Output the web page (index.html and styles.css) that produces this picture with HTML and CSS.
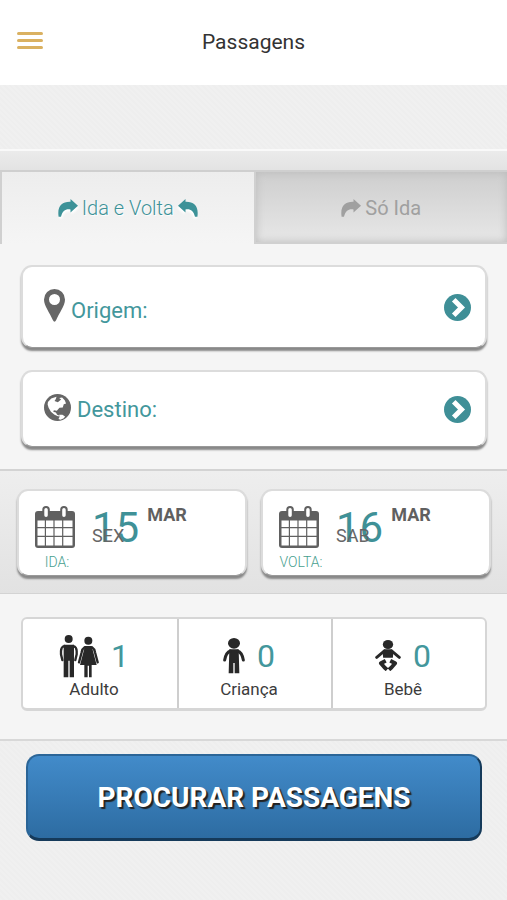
FILE: index.html
```html
<!DOCTYPE html>
<html lang="pt-BR">
<head>
<meta charset="utf-8">
<meta name="viewport" content="width=device-width, initial-scale=1">
<title>Passagens</title>
<link rel="stylesheet" href="styles.css">
</head>
<body>
<svg class="defs" aria-hidden="true">
  <symbol id="arrow" viewBox="0 0 20 18"><path d="M12.500 0 20 6.800 12.500 13.500V10.500C8 9.600 4.600 11.500 3 17.800H.6C-1 7 4 2.500 12.500 2.800Z"/></symbol>
  <symbol id="chevron" viewBox="0 0 27 27"><circle cx="13.500" cy="13.500" r="13.500"/><path d="M11.500 7.500 17.500 13.500 11.500 19.500" fill="none" stroke="#fff" stroke-width="5" stroke-linecap="square"/></symbol>
  <symbol id="calendar" viewBox="0 0 40 42">
    <rect y="5" width="40" height="37" rx="3"/>
    <path fill="#fff" d="M2.500 14.500h7.300v6.600H2.500zm8.500 0h7.400v6.600H11zm8.600 0h7.500v6.600h-7.500zm8.700 0h9.200v6.600h-9.200zM2.500 22.300h7.300v7.400H2.500zm8.500 0h7.400v7.400H11zm8.600 0h7.500v7.400h-7.500zm8.700 0h9.200v7.400h-9.200zM2.500 31h7.300v8.500H2.500zm8.500 0h7.400v8.500H11zm8.600 0h7.500v8.500h-7.500zm8.700 0h9.200v8.500h-9.200z"/>
    <rect x="8.300" y="1" width="5.500" height="11" rx="2.700" fill="#fff" stroke="currentColor" stroke-width="2"/>
    <rect x="26.200" y="1" width="5.500" height="11" rx="2.700" fill="#fff" stroke="currentColor" stroke-width="2"/>
  </symbol>
</svg>

<header class="topbar">
  <button class="menu" type="button" aria-label="Menu"><span></span><span></span><span></span></button>
  <h1>Passagens</h1>
</header>

<main>
  <div class="band"></div>
  <nav class="tabs">
    <button class="tab active" type="button"><svg><use href="#arrow"/></svg>Ida e Volta<svg class="flip"><use href="#arrow"/></svg></button>
    <button class="tab" type="button"><svg><use href="#arrow"/></svg>Só Ida</button>
  </nav>

  <section class="places">
    <button class="card place origin" type="button">
      <svg class="pin" viewBox="0 0 21 33"><path fill-rule="evenodd" d="M10.500 0A10.500 10.500 0 0 0 0 10.500C0 17 6 24 8.800 31q1.700 3.500 3.400 0C15 24 21 17 21 10.500A10.500 10.500 0 0 0 10.500 0ZM10.500 5a5.500 5.500 0 1 1 0 11 5.500 5.500 0 0 1 0-11Z"/></svg>
      <span>Origem:</span>
      <svg class="go"><use href="#chevron"/></svg>
    </button>
    <button class="card place" type="button">
      <svg class="globe" viewBox="132 98 82 82"><circle cx="173" cy="139" r="41"/><path fill="#fff" d="m144 122 10-10 16-6-2 7-4 6 10 4 10-8-6-5 9-1 8 8 4 10-7 2-3 10-10 1-8 9-9-2-2 5 8 2 4 7 6 2-2 3-12-5-11-9-7-12-3-10zM178 161l10 0 8 5-4 6-10 4-6-2 3-6z"/></svg>
      <span>Destino:</span>
      <svg class="go"><use href="#chevron"/></svg>
    </button>
  </section>

  <section class="dates">
    <button class="card date" type="button">
      <span class="when"><svg><use href="#calendar"/></svg><span>IDA:</span></span>
      <span class="day">15<span class="weekday">SEX</span></span>
      <span class="month">MAR</span>
    </button>
    <button class="card date" type="button">
      <span class="when"><svg><use href="#calendar"/></svg><span>VOLTA:</span></span>
      <span class="day">16<span class="weekday">SAB</span></span>
      <span class="month">MAR</span>
    </button>
  </section>

  <section class="people">
    <div class="group">
      <button class="person" type="button">
        <span class="count"><svg class="adult" viewBox="180 100 120 132"><circle cx="209" cy="115" r="12"/><path d="M194 132h31v98h-13v-50h-4v50h-14z"/><circle cx="268" cy="120" r="12"/><path d="M258 136h20l15 57h-15v37h-8v-35h-4v35h-10v-37h-13z"/><path fill="none" stroke="currentColor" stroke-width="7" stroke-linecap="round" d="M196 136q-10 3-10 15v10l4 17M223 136q10 3 10 15v10l-4 17M257 140q-7 4-9 15l-8 30M279 140q7 4 9 15l8 30"/></svg><b>1</b></span>
        <span class="name">Adulto</span>
      </button>
      <button class="person" type="button">
        <span class="count"><svg class="child" viewBox="672 112 66 108"><ellipse cx="705" cy="128" rx="18" ry="16"/><path d="M691 146h28l2 72h-14v-31h-4v31h-14z"/><path fill="none" stroke="currentColor" stroke-width="9" stroke-linecap="round" d="M694 151q-13 4-17 27M716 151q13 4 17 27"/></svg><b>0</b></span>
        <span class="name">Criança</span>
      </button>
      <button class="person" type="button">
        <span class="count"><svg class="baby" viewBox="374 117 80 96"><ellipse cx="414" cy="131" rx="16" ry="14"/><path d="M402 146h24l5 6-2 20h-30l-2-20z"/><path fill="none" stroke="currentColor" stroke-width="9" stroke-linecap="round" d="m403 151-24 20M425 151l24 20"/><path fill="none" stroke="currentColor" stroke-width="12" stroke-linejoin="round" d="m407 181-15 8 12 14 7 6M421 181l15 8-12 14-7 6"/></svg><b>0</b></span>
        <span class="name">Bebê</span>
      </button>
    </div>
  </section>

  <section class="actions">
    <button class="search" type="submit">PROCURAR PASSAGENS</button>
  </section>
</main>
</body>
</html>
```
FILE: styles.css
```css
* { box-sizing: border-box; }

body {
  margin: 0;
  min-height: 100vh;
  font-family: Roboto, "Liberation Sans", sans-serif;
  color: #333;
  background: repeating-linear-gradient(45deg, #f0f0f0 0 2px, #eee 2px 4px);
}

button {
  margin: 0;
  padding: 0;
  border: 0;
  background: none;
  font: inherit;
  color: inherit;
  cursor: pointer;
}

svg { fill: currentColor; flex: none; }
.defs { display: none; }

.topbar {
  display: grid;
  grid-template-columns: 26px 1fr 26px;
  align-items: center;
  height: 85px;
  padding: 0 17px 2px;
  background: #fff;
}
.topbar h1 {
  margin: 0;
  text-align: center;
  font-size: 21px;
  font-weight: 400;
  line-height: 24px;
}
.menu { display: grid; gap: 4px; padding-bottom: 2px; }
.menu span { height: 3px; border-radius: 2px; background: #dab161; }

main { padding-top: 64px; }

.band {
  height: 23px;
  border-top: 2px solid #f9f9f9;
  border-bottom: 2px solid #cfcfcf;
  background: linear-gradient(#ebebeb, #e3e3e3);
}

.tabs { display: grid; grid-template-columns: 1fr 1fr; background: #f5f5f5; }
.tab {
  display: flex;
  align-items: center;
  justify-content: center;
  gap: 4px;
  height: 72px;
  padding-top: 2px;
  font-size: 20px;
  color: #a0a0a0;
  border: 2px solid #d0d0d0;
  border-top: 0;
  border-right: 0;
  background: linear-gradient(#cecece, #e7e7e7);
  box-shadow: inset 0 0 8px #bbb;
}
.tab.active {
  padding-top: 0;
  font-weight: 300;
  color: #3d9298;
  border-bottom: 0;
  background: linear-gradient(#ededed, #f5f5f5);
  box-shadow: none;
  text-shadow: 1px 1px 1px #fff;
}
.tab svg { width: 20px; height: 18px; }
.tab.active svg { filter: drop-shadow(1px 2px 1px #fff); }
.flip { transform: scaleX(-1); }

.card {
  border: 2px solid #dcdcdc;
  border-bottom: 1px solid #999;
  border-radius: 11px;
  background: #fff;
  box-shadow: 0 3px 2px #888;
}

.places {
  display: grid;
  gap: 22px;
  padding: 21px 20px 22px 21px;
  background: #f5f5f5;
}
.place {
  display: flex;
  align-items: center;
  gap: 6px;
  height: 77px;
  padding: 0 14px 0 21px;
  font-size: 22px;
  line-height: 26px;
  color: #43979c;
}
.place span { padding-top: 2px; }
.origin { height: 83px; }
.origin span { padding-top: 8px; }
.pin { width: 21px; height: 33px; margin-bottom: 4px; color: #666; }
.globe { width: 27px; height: 27px; margin-bottom: 4px; color: #666; }
.go { width: 27px; height: 27px; margin-left: auto; color: #3f8f97; }

.dates {
  display: grid;
  grid-template-columns: 1fr 1fr;
  gap: 14px;
  padding: 18px 16px 17px 17px;
  border: solid #d3d3d3;
  border-width: 2px 0 1px;
  background: linear-gradient(#eee, #e2e2e2);
}
.date {
  display: flex;
  align-items: flex-start;
  height: 87px;
  padding: 15px 0 0 15px;
  color: #606060;
}
.when {
  display: grid;
  justify-items: center;
  gap: 6px;
  width: 46px;
  font-size: 14px;
  font-weight: 300;
  line-height: 16px;
  color: #48a08f;
}
.when svg { width: 40px; height: 42px; margin-right: 4px; color: #606060; }
.day {
  position: relative;
  margin-left: 12px;
  font-size: 42px;
  line-height: 44px;
  color: #3f9197;
}
.weekday {
  position: absolute;
  left: 0;
  top: 20px;
  font-size: 18px;
  line-height: 20px;
  color: #666;
}
.month {
  margin-left: 8px;
  font-size: 18px;
  font-weight: 700;
  line-height: 18px;
}

.people { padding: 23px 20px 28px 21px; background: #f5f5f5; border-bottom: 2px solid #d8d8d8; }
.group {
  display: grid;
  grid-template-columns: repeat(3, 1fr);
  border: 2px solid #d6d6d6;
  border-bottom-width: 3px;
  border-radius: 6px;
  background: #fff;
}
.person { height: 89px; padding: 6px 12px 0 0; }
.person + .person { border-left: 2px solid #cecece; }
.count {
  display: flex;
  align-items: center;
  justify-content: center;
  gap: 12px;
  height: 44px;
  color: #282828;
}
.count b { font-size: 32px; font-weight: 400; line-height: 36px; color: #43979c; }
.name { display: block; font-size: 17px; line-height: 22px; color: #3c3c3c; }
.adult { width: 40px; height: 44px; }
.child { width: 22px; height: 36px; }
.baby { width: 26px; height: 31px; }

.actions { padding: 13px 25px 32px 26px; }
.search {
  width: 100%;
  height: 87px;
  border: 2px solid #2b6597;
  border-right-color: #153a5a;
  border-bottom: 3px solid #153a5a;
  border-radius: 13px;
  background: linear-gradient(#428bca, #2d6ca2);
  font-size: 28px;
  font-weight: 700;
  color: #fff;
  text-shadow: 2px 2px 1px #222;
}
```
